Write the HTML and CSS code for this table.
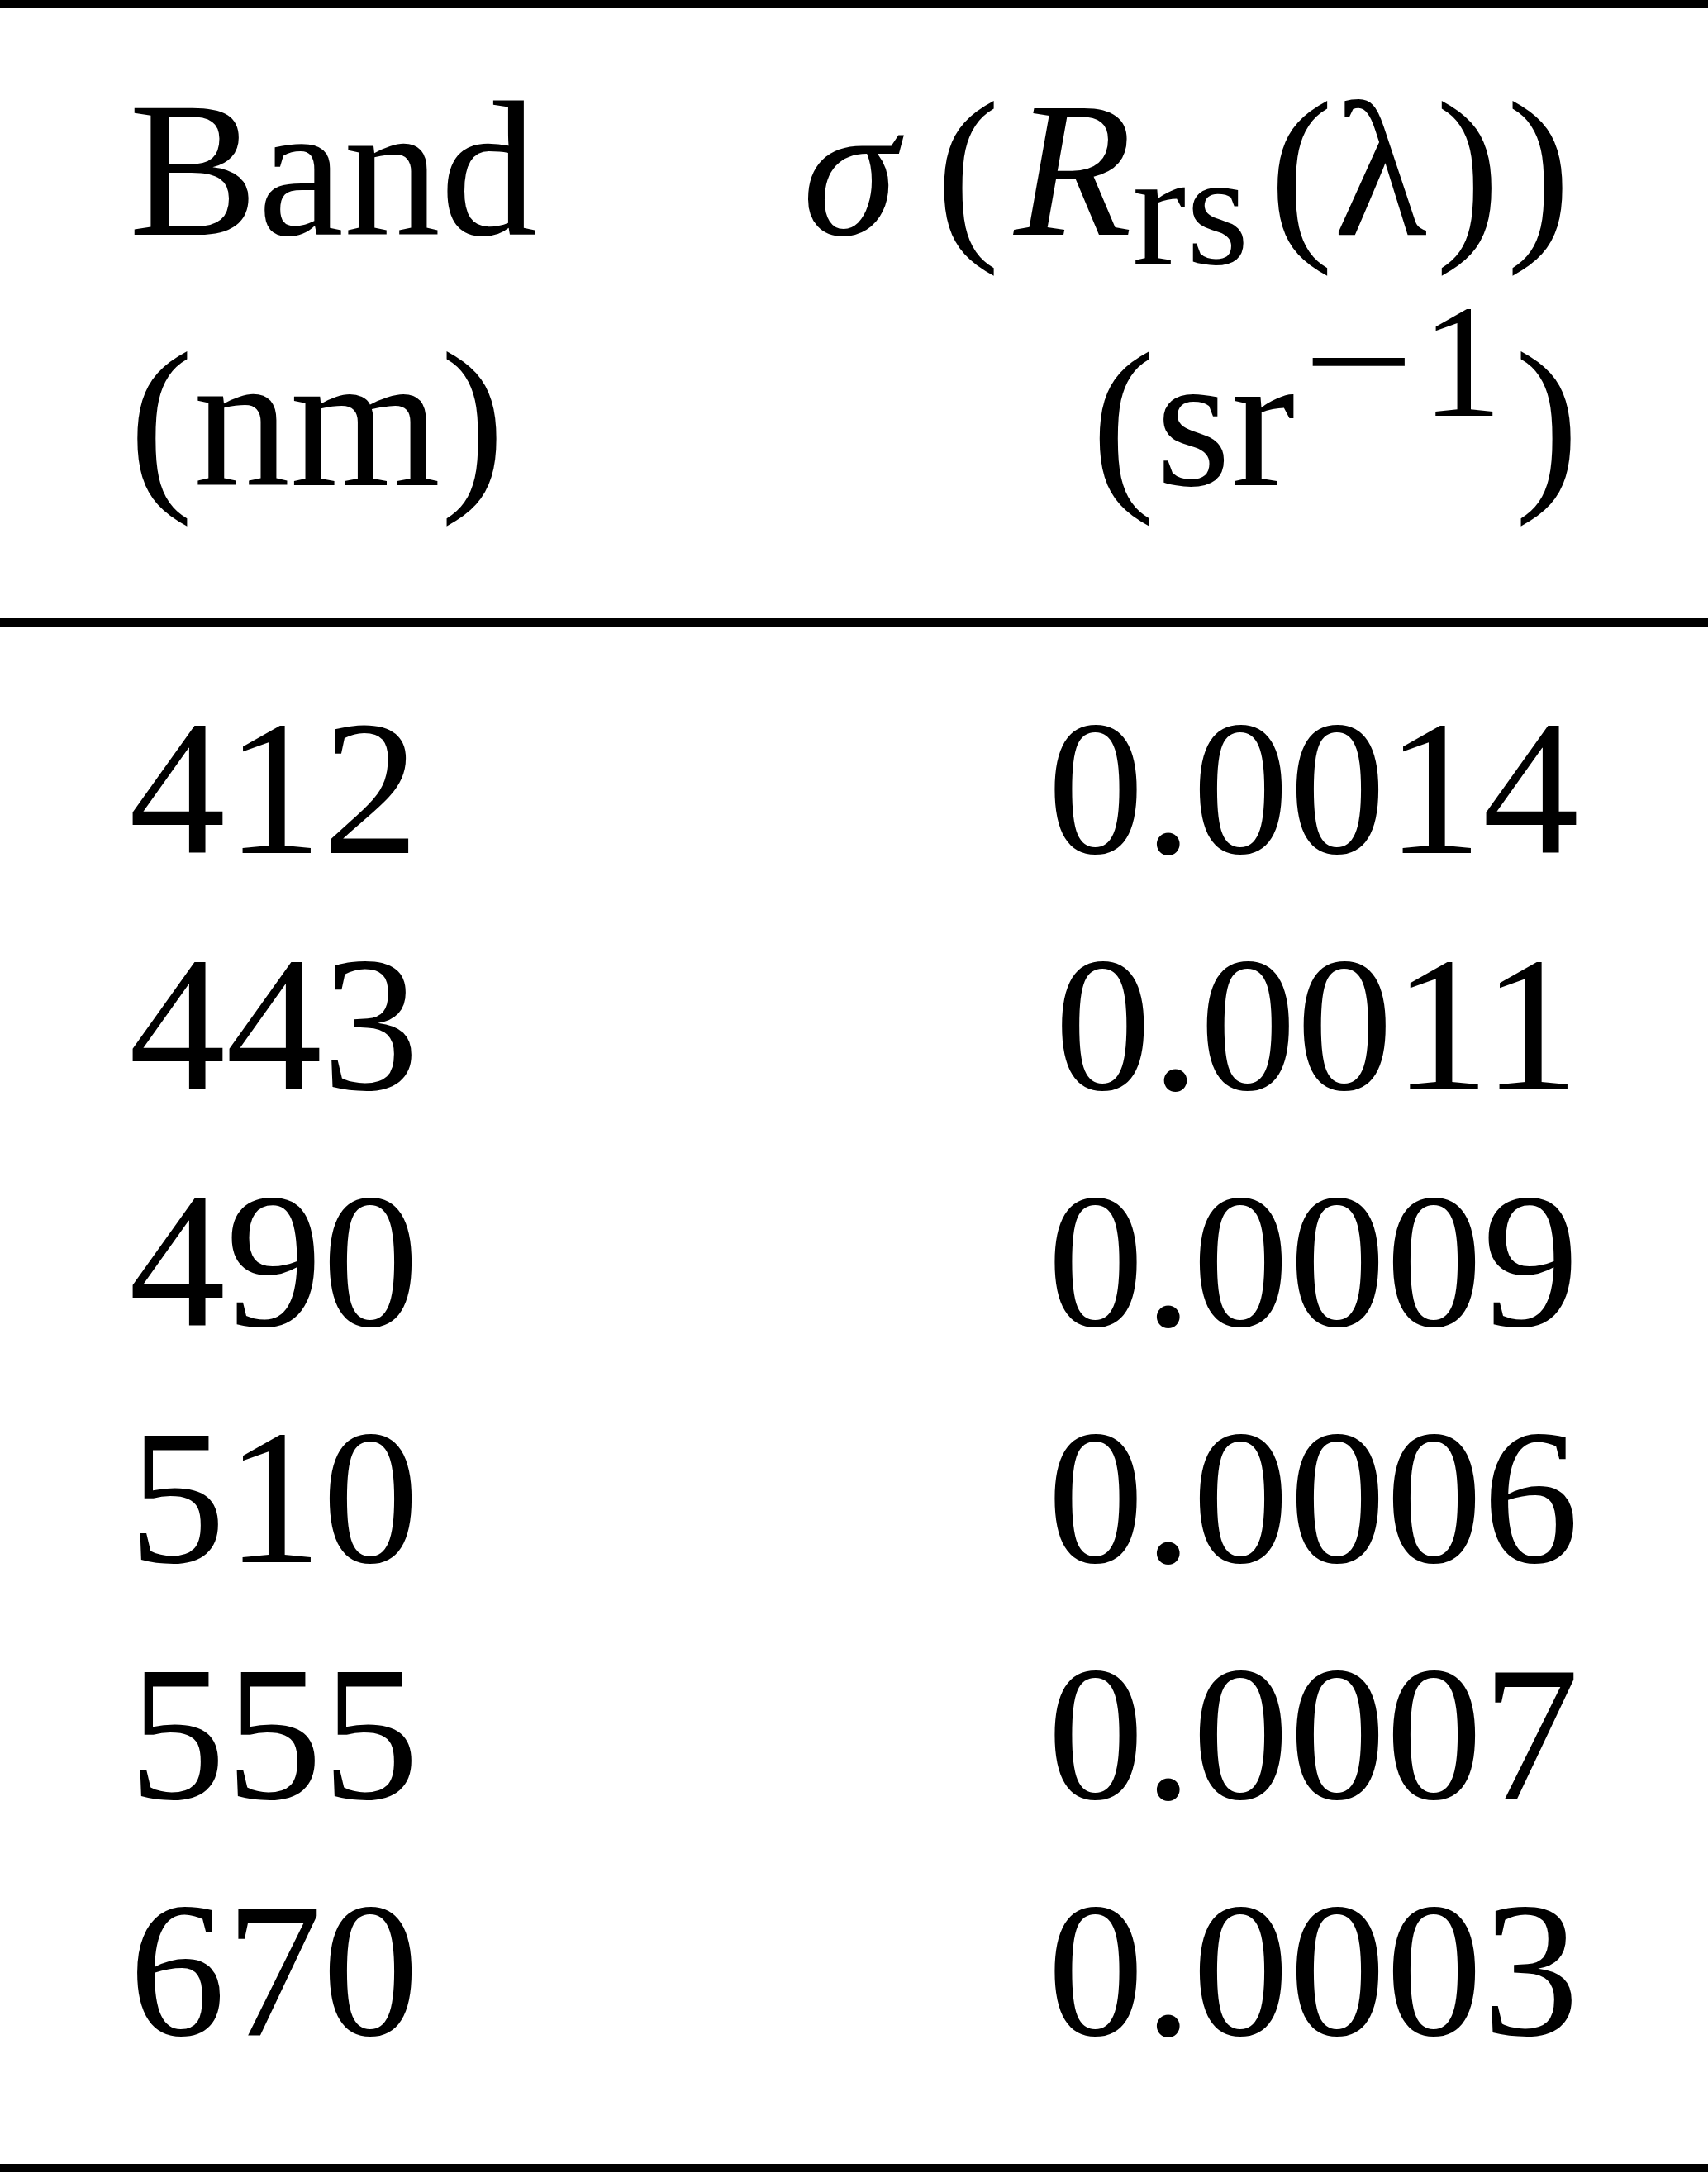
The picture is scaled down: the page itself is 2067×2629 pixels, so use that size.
FILE: index.html
```html
<!DOCTYPE html>
<html lang="en">
<head>
<meta charset="utf-8">
<title>Band uncertainty table</title>
<link rel="stylesheet" href="styles.css">
</head>
<body>
<table class="tbl">
  <thead>
    <tr>
      <th class="col-band"><span class="hline">Band</span><span class="hline">(nm)</span></th>
      <th class="col-val">
        <span class="hline hline-1"><i class="sigma">σ</i><span class="fence f-open1">(</span><i class="rvar">R</i><span class="sub">rs</span><span class="fence f-open2">(</span><span class="lambda">λ</span><span class="fence">)</span><span class="fence f-close2">)</span></span>
        <span class="hline hline-2"><span class="fence">(</span>sr<span class="sup"><span class="minus">−</span>1</span><span class="fence f-close-unit">)</span></span>
      </th>
    </tr>
  </thead>
  <tbody>
    <tr class="row-first"><td class="col-band">412</td><td class="col-val">0.0014</td></tr>
    <tr><td class="col-band">443</td><td class="col-val">0.0011</td></tr>
    <tr><td class="col-band">490</td><td class="col-val">0.0009</td></tr>
    <tr><td class="col-band">510</td><td class="col-val">0.0006</td></tr>
    <tr><td class="col-band">555</td><td class="col-val">0.0007</td></tr>
    <tr class="row-last"><td class="col-band">670</td><td class="col-val">0.0003</td></tr>
  </tbody>
</table>
</body>
</html>
```

FILE: styles.css
```css
html, body {
  margin: 0;
  padding: 0;
  background: #ffffff;
}

body {
  font-family: "Liberation Serif", "Times New Roman", serif;
  font-size: 234px;
  color: #000000;
}

.tbl {
  width: 100%;
  border-collapse: separate;
  border-spacing: 0;
}

.tbl th {
  font-weight: normal;
  line-height: 303px;
  padding-top: 44px;
  padding-bottom: 88px;
  border-top: 10px solid #000;
  border-bottom: 10px solid #000;
  vertical-align: top;
}

.tbl td {
  line-height: 286px;
  padding-top: 0;
  padding-bottom: 0;
  vertical-align: top;
}

.col-band {
  text-align: left;
  padding-left: 156px;
  padding-right: 0;
}

.col-val {
  text-align: right;
  padding-right: 156px;
  padding-left: 0;
}

.row-first td {
  padding-top: 52px;
}

.row-last td {
  padding-bottom: 92px;
  border-bottom: 10px solid #000;
}

.hline {
  display: block;
  white-space: nowrap;
}

.hline-1 {
  padding-right: 10px;
}

.sigma,
.rvar {
  font-style: italic;
}

.sigma {
  margin-right: 46px;
}

.f-open1 {
  margin-right: 17px;
}

.sub {
  font-size: 196px;
  line-height: 0;
  vertical-align: -35px;
  margin-right: 24px;
}

.lambda {
  margin-right: 10px;
}

.f-close2 {
  margin-left: 8px;
}

.sup {
  font-size: 196px;
  line-height: 0;
  vertical-align: 84px;
}

.minus {
  display: inline-block;
  margin: 0 21px;
  transform: scaleX(1.22);
}

.f-close-unit {
  margin-left: 15px;
}
```
